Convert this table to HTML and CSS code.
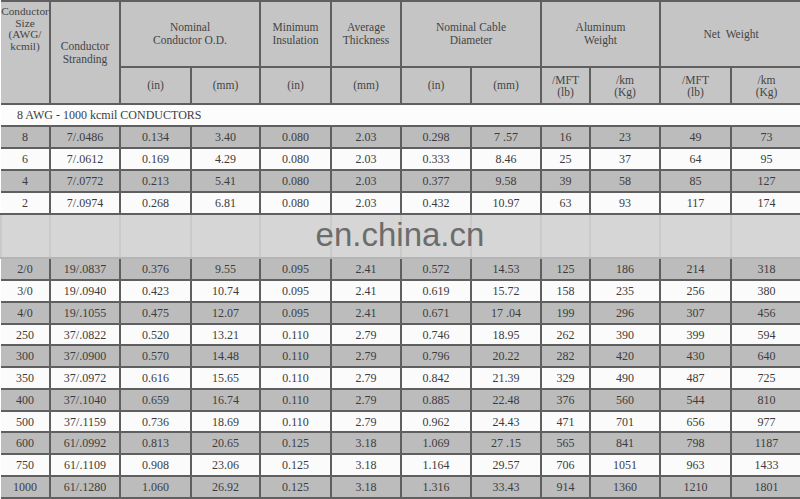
FILE: index.html
```html
<!DOCTYPE html>
<html lang="en">
<head>
<meta charset="utf-8">
<title>Aluminum Conductor Specifications</title>
<link rel="stylesheet" href="styles.css">
</head>
<body>
<div class="sheet">
  <table class="spec">
    <colgroup>
      <col class="c-size"><col class="c-w70"><col class="c-w71"><col class="c-w69"><col class="c-w71"><col class="c-w70">
      <col class="c-w70"><col class="c-w70"><col class="c-size"><col class="c-w70"><col class="c-w71"><col class="c-w70">
    </colgroup>
    <thead>
      <tr class="h1">
        <th rowspan="2" class="h-size">Conductor<br>Size<br>(AWG/<br>kcmil)</th>
        <th rowspan="2">Conductor<br>Stranding</th>
        <th colspan="2">Nominal<br>Conductor O.D.</th>
        <th>Minimum<br>Insulation</th>
        <th>Average<br>Thickness</th>
        <th colspan="2">Nominal Cable<br>Diameter</th>
        <th colspan="2">Aluminum<br>Weight</th>
        <th colspan="2">Net&nbsp; Weight</th>
      </tr>
      <tr class="h2">
        <th>(in)</th><th>(mm)</th><th>(in)</th><th>(mm)</th><th>(in)</th><th>(mm)</th>
        <th class="two">/MFT<br>(lb)</th><th class="two">/km<br>(Kg)</th>
        <th class="two">/MFT<br>(lb)</th><th class="two">/km<br>(Kg)</th>
      </tr>
    </thead>
    <tbody>
      <tr class="section"><td colspan="12">8 AWG - 1000 kcmil CONDUCTORS</td></tr>
      <tr class="dark"><td>8</td><td>7/.0486</td><td>0.134</td><td>3.40</td><td>0.080</td><td>2.03</td><td>0.298</td><td>7 .57</td><td>16</td><td>23</td><td>49</td><td>73</td></tr>
      <tr class="light"><td>6</td><td>7/.0612</td><td>0.169</td><td>4.29</td><td>0.080</td><td>2.03</td><td>0.333</td><td>8.46</td><td>25</td><td>37</td><td>64</td><td>95</td></tr>
      <tr class="dark"><td>4</td><td>7/.0772</td><td>0.213</td><td>5.41</td><td>0.080</td><td>2.03</td><td>0.377</td><td>9.58</td><td>39</td><td>58</td><td>85</td><td>127</td></tr>
      <tr class="light"><td>2</td><td>7/.0974</td><td>0.268</td><td>6.81</td><td>0.080</td><td>2.03</td><td>0.432</td><td>10.97</td><td>63</td><td>93</td><td>117</td><td>174</td></tr>
      <tr class="band"><td></td><td></td><td></td><td></td><td></td><td></td><td></td><td></td><td></td><td></td><td></td><td></td></tr>
      <tr class="dark"><td>2/0</td><td>19/.0837</td><td>0.376</td><td>9.55</td><td>0.095</td><td>2.41</td><td>0.572</td><td>14.53</td><td>125</td><td>186</td><td>214</td><td>318</td></tr>
      <tr class="light"><td>3/0</td><td>19/.0940</td><td>0.423</td><td>10.74</td><td>0.095</td><td>2.41</td><td>0.619</td><td>15.72</td><td>158</td><td>235</td><td>256</td><td>380</td></tr>
      <tr class="dark"><td>4/0</td><td>19/.1055</td><td>0.475</td><td>12.07</td><td>0.095</td><td>2.41</td><td>0.671</td><td>17 .04</td><td>199</td><td>296</td><td>307</td><td>456</td></tr>
      <tr class="light short"><td>250</td><td>37/.0822</td><td>0.520</td><td>13.21</td><td>0.110</td><td>2.79</td><td>0.746</td><td>18.95</td><td>262</td><td>390</td><td>399</td><td>594</td></tr>
      <tr class="dark"><td>300</td><td>37/.0900</td><td>0.570</td><td>14.48</td><td>0.110</td><td>2.79</td><td>0.796</td><td>20.22</td><td>282</td><td>420</td><td>430</td><td>640</td></tr>
      <tr class="light"><td>350</td><td>37/.0972</td><td>0.616</td><td>15.65</td><td>0.110</td><td>2.79</td><td>0.842</td><td>21.39</td><td>329</td><td>490</td><td>487</td><td>725</td></tr>
      <tr class="dark"><td>400</td><td>37/.1040</td><td>0.659</td><td>16.74</td><td>0.110</td><td>2.79</td><td>0.885</td><td>22.48</td><td>376</td><td>560</td><td>544</td><td>810</td></tr>
      <tr class="light short"><td>500</td><td>37/.1159</td><td>0.736</td><td>18.69</td><td>0.110</td><td>2.79</td><td>0.962</td><td>24.43</td><td>471</td><td>701</td><td>656</td><td>977</td></tr>
      <tr class="dark"><td>600</td><td>61/.0992</td><td>0.813</td><td>20.65</td><td>0.125</td><td>3.18</td><td>1.069</td><td>27 .15</td><td>565</td><td>841</td><td>798</td><td>1187</td></tr>
      <tr class="light"><td>750</td><td>61/.1109</td><td>0.908</td><td>23.06</td><td>0.125</td><td>3.18</td><td>1.164</td><td>29.57</td><td>706</td><td>1051</td><td>963</td><td>1433</td></tr>
      <tr class="dark"><td>1000</td><td>61/.1280</td><td>1.060</td><td>26.92</td><td>0.125</td><td>3.18</td><td>1.316</td><td>33.43</td><td>914</td><td>1360</td><td>1210</td><td>1801</td></tr>
    </tbody>
  </table>
  <div class="watermark">en.china.cn</div>
</div>
</body>
</html>
```

FILE: styles.css
```css
html, body {
  margin: 0;
  padding: 0;
  background: #ffffff;
}

body {
  font-family: "Liberation Serif", "Times New Roman", serif;
  color: #3c3c3c;
}

.sheet {
  position: relative;
  width: 800px;
  overflow: hidden;
}

.spec {
  width: 800px;
  border-collapse: collapse;
  table-layout: fixed;
}

.c-size { width: 49px; }
.c-w69 { width: 69px; }
.c-w70 { width: 70px; }
.c-w71 { width: 71px; }

.spec th,
.spec td {
  border: 2px solid #5f5f5f;
  padding: 0;
  text-align: center;
  vertical-align: middle;
  font-family: "Liberation Serif", "Times New Roman", serif;
  font-weight: normal;
  font-size: 12px;
  line-height: 14px;
}

.spec tr > :first-child { border-left: none; }
.spec tr > :last-child { border-right: none; }

.spec th {
  background: #c5c5c5;
  font-size: 11.5px;
  line-height: 13px;
  color: #444444;
}

.spec tr.h1 { height: 66px; }
.spec tr.h2 { height: 37px; }

.spec th.h-size {
  vertical-align: top;
  padding-top: 4px;
  line-height: 11.5px;
  font-size: 11.3px;
}

.spec th.two { line-height: 12px; }

.spec tr.section { height: 22px; }
.spec .section td {
  background: #fcfcfc;
  text-align: left;
  padding-left: 16px;
  font-size: 12px;
}

.spec tr { height: 22px; }
.spec tr.short { height: 21px; }

.spec .dark td { background: #bcbcbc; }
.spec .light td { background: #fbfbfb; }

.spec tr.band { height: 44px; }
.spec .band td {
  background: #d6d6d6;
  border-left: 2px solid #cacaca;
  border-right: 2px solid #cacaca;
  border-bottom: 2px solid #b4b4b4;
}

.watermark {
  position: absolute;
  left: 0;
  right: 0;
  top: 213px;
  height: 44px;
  display: flex;
  align-items: center;
  justify-content: center;
  font-family: "Liberation Sans", Arial, sans-serif;
  font-size: 33px;
  color: #6c6c6c;
}
```
